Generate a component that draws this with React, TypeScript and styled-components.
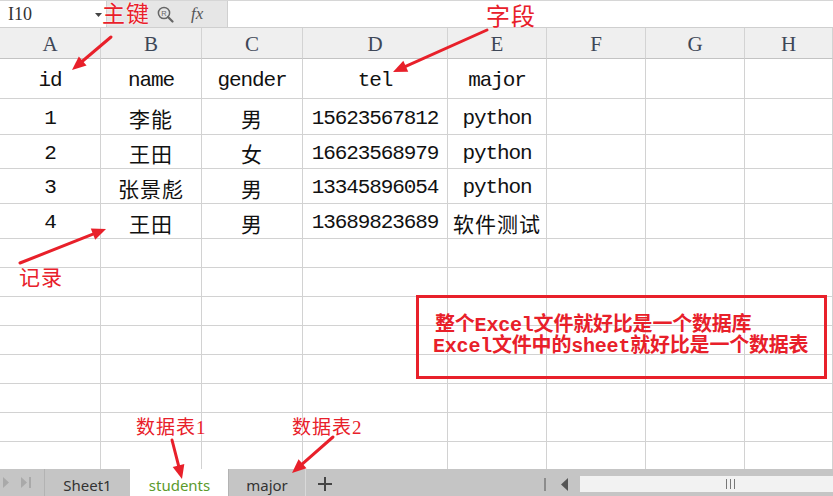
import React from "react";
import styled, { createGlobalStyle } from "styled-components";

const RED = "#e8202a";
const COLS = "101px 101px 101px 145px 99px 99px 99px 1fr";

const GlobalStyle = createGlobalStyle`
  html, body { margin: 0; padding: 0; background: #fff; overflow: hidden; }
  body { font-family: "Noto Sans", "Noto Sans CJK SC", sans-serif; }
  #root { width: 833px; height: 496px; }
`;

const Page = styled.div`
  position: relative;
  width: 833px;
  height: 496px;
  display: flex;
  flex-direction: column;
  overflow: hidden;
`;

const Toolbar = styled.div`
  height: 28px;
  box-sizing: border-box;
  display: flex;
  align-items: stretch;
  border-top: 1px solid #d6d6d6;
  border-bottom: 1px solid #cfcfcf;
  background: #e6e6e6;
`;

const NameBox = styled.div`
  width: 107px;
  box-sizing: border-box;
  background: #fff;
  border-right: 1px solid #d0d0d0;
  display: flex;
  align-items: center;
  justify-content: space-between;
  padding: 1px 4px 0 8px;
  font-family: "Liberation Serif", serif;
  font-size: 18px;
  color: #333;
`;

const ToolIcons = styled.div`
  width: 120px;
  display: flex;
  align-items: center;
  padding-left: 50px;
  gap: 17px;
  box-sizing: border-box;
`;

const Fx = styled.span`
  font-family: "Liberation Serif", serif;
  font-style: italic;
  font-size: 17px;
  color: #555;
  line-height: 1;
  margin-top: -1px;
`;

const Formula = styled.div`
  flex: 1;
  background: #fff;
  border-left: 1px solid #d0d0d0;
`;

const Sheet = styled.div`
  flex: 1;
  overflow: hidden;
  display: flex;
  flex-direction: column;
`;

const Row = styled.div<{ $h: number }>`
  display: grid;
  grid-template-columns: ${COLS};
  height: ${(p) => p.$h}px;
  flex-shrink: 0;
`;

const HeadCell = styled.div`
  box-sizing: border-box;
  background: #efefef;
  border-right: 1px solid #d3d3d3;
  border-bottom: 1px solid #c3c3c3;
  display: flex;
  align-items: center;
  justify-content: center;
  padding-top: 2px;
  font-family: "Liberation Serif", serif;
  font-size: 21px;
  color: #3e4757;
`;

const Cell = styled.div<{ $cjk?: boolean }>`
  box-sizing: border-box;
  border-right: 1px solid #d2d2d2;
  border-bottom: 1px solid #d2d2d2;
  display: flex;
  align-items: center;
  justify-content: center;
  padding-top: 3px;
  white-space: nowrap;
  color: #111;
  font-family: ${(p) =>
    p.$cjk ? `"Noto Sans CJK SC", sans-serif` : `"Liberation Mono", "Noto Sans CJK SC", monospace`};
  font-size: ${(p) => (p.$cjk ? 21 : 21)}px;
  letter-spacing: ${(p) => (p.$cjk ? 1 : -1.1)}px;
`;

const TabBar = styled.div`
  height: 27px;
  flex-shrink: 0;
  background: #c5c5c5;
  display: flex;
  align-items: stretch;
`;

const NavArea = styled.div`
  width: 44px;
  display: flex;
  align-items: center;
  padding-left: 3px;
  gap: 12px;
  box-sizing: border-box;
`;

const Tab = styled.div<{ $active?: boolean; $w: number }>`
  width: ${(p) => p.$w}px;
  box-sizing: border-box;
  display: flex;
  align-items: center;
  justify-content: center;
  padding-top: 5px;
  font-family: "Noto Sans", sans-serif;
  font-size: 15px;
  background: ${(p) => (p.$active ? "#fff" : "transparent")};
  color: ${(p) => (p.$active ? "#5c9a2c" : "#333")};
  border-left: 1px solid ${(p) => (p.$active ? "#fff" : "#b3b3b3")};
`;

const AddTab = styled.div`
  width: 38px;
  box-sizing: border-box;
  border-left: 1px solid #d9d9d9;
  display: flex;
  align-items: center;
  justify-content: center;
  padding-top: 3px;
`;

const Spacer = styled.div`
  flex: 1;
`;

const ScrollNav = styled.div`
  display: flex;
  align-items: center;
  gap: 15px;
  padding-right: 12px;
  padding-top: 3px;
`;

const Track = styled.div`
  width: 253px;
  height: 16px;
  align-self: center;
  margin-top: 3px;
  background: #f2f2f2;
  display: flex;
  align-items: center;
  justify-content: flex-end;
  padding-right: 98px;
  box-sizing: border-box;
`;

const Overlay = styled.svg`
  position: absolute;
  left: 0;
  top: 0;
  pointer-events: none;
`;

const Label = styled.span<{ $x: number; $y: number; $size: number }>`
  position: absolute;
  left: ${(p) => p.$x}px;
  top: ${(p) => p.$y}px;
  font-size: ${(p) => p.$size}px;
  line-height: 1;
  color: ${RED};
  font-family: "Liberation Serif", "Noto Sans CJK SC", serif;
  font-weight: 400;
  letter-spacing: 1px;
  white-space: nowrap;
  text-shadow: 0 0 2px #fff, 0 0 1px #fff;
`;

const NoteBox = styled.div`
  position: absolute;
  left: 416px;
  top: 295px;
  width: 411px;
  height: 84px;
  box-sizing: border-box;
  border: 3px solid ${RED};
  padding: 17px 0 0 16px;
  display: flex;
  flex-direction: column;
`;

const NoteLine = styled.div<{ $shift?: number }>`
  font-family: "Liberation Mono", "Noto Sans CJK SC", monospace;
  font-weight: 700;
  font-size: 20px;
  line-height: 21px;
  letter-spacing: -0.2px;
  color: ${RED};
  white-space: nowrap;
  margin-left: ${(p) => p.$shift ?? 0}px;
`;

const letters = ["A", "B", "C", "D", "E", "F", "G", "H"];

const data: { h: number; cells: string[] }[] = [
  { h: 40, cells: ["id", "name", "gender", "tel", "major"] },
  { h: 36, cells: ["1", "李能", "男", "15623567812", "python"] },
  { h: 34, cells: ["2", "王田", "女", "16623568979", "python"] },
  { h: 35, cells: ["3", "张景彪", "男", "13345896054", "python"] },
  { h: 35, cells: ["4", "王田", "男", "13689823689", "软件测试"] },
];

const isCjk = (s: string) => /[\u4e00-\u9fff]/.test(s);

function arrow(x1: number, y1: number, x2: number, y2: number) {
  const len = 14;
  const half = 6;
  const dx = x2 - x1;
  const dy = y2 - y1;
  const L = Math.hypot(dx, dy);
  const ux = dx / L;
  const uy = dy / L;
  const bx = x2 - ux * len;
  const by = y2 - uy * len;
  const px = -uy;
  const py = ux;
  return {
    line: { x1, y1, x2: bx + ux * 2, y2: by + uy * 2 },
    head: `${x2},${y2} ${bx + px * half},${by + py * half} ${bx - px * half},${by - py * half}`,
  };
}

const arrows = [
  arrow(111, 37, 72, 70),
  arrow(487, 30, 393, 72),
  arrow(20, 263, 106, 229),
  arrow(172, 440, 182, 479),
  arrow(333, 437, 292, 473),
];

export default function App() {
  return (
    <>
      <GlobalStyle />
      <Page>
        <Toolbar>
          <NameBox>
            <span>I10</span>
            <svg width="7" height="4" viewBox="0 0 7 4">
              <path d="M0 0 L7 0 L3.5 4 Z" fill="#444" />
            </svg>
          </NameBox>
          <ToolIcons>
            <svg width="17" height="17" viewBox="0 0 17 17">
              <circle cx="7" cy="7" r="5.6" fill="none" stroke="#666" strokeWidth="1.5" />
              <line x1="11" y1="11" x2="15.5" y2="15.5" stroke="#666" strokeWidth="2.2" strokeLinecap="round" />
              <text x="7" y="9.6" fontSize="7.5" textAnchor="middle" fill="#666" fontFamily="Liberation Sans, sans-serif">R</text>
            </svg>
            <Fx>fx</Fx>
          </ToolIcons>
          <Formula />
        </Toolbar>

        <Sheet>
          <Row $h={31}>
            {letters.map((l) => (
              <HeadCell key={l}>{l}</HeadCell>
            ))}
          </Row>
          {data.map((r, i) => (
            <Row $h={r.h} key={i}>
              {letters.map((l, j) => {
                const v = r.cells[j] ?? "";
                return (
                  <Cell key={l} $cjk={isCjk(v)}>
                    {v}
                  </Cell>
                );
              })}
            </Row>
          ))}
          {Array.from({ length: 9 }).map((_, i) => (
            <Row $h={29} key={"e" + i}>
              {letters.map((l) => (
                <Cell key={l} />
              ))}
            </Row>
          ))}
        </Sheet>

        <TabBar>
          <NavArea>
            <svg width="6" height="11" viewBox="0 0 6 11">
              <path d="M0 0 L6 5.5 L0 11 Z" fill="#a9a9a9" />
            </svg>
            <svg width="10" height="11" viewBox="0 0 10 11">
              <path d="M0 0 L6 5.5 L0 11 Z" fill="#a9a9a9" />
              <rect x="8" y="0" width="2" height="11" fill="#a9a9a9" />
            </svg>
          </NavArea>
          <Tab $w={86}>Sheet1</Tab>
          <Tab $w={98} $active>
            students
          </Tab>
          <Tab $w={77}>major</Tab>
          <AddTab>
            <svg width="14" height="14" viewBox="0 0 14 14">
              <rect x="6" y="0" width="2" height="14" fill="#444" />
              <rect x="0" y="6" width="14" height="2" fill="#444" />
            </svg>
          </AddTab>
          <Spacer />
          <ScrollNav>
            <svg width="2" height="13" viewBox="0 0 2 13">
              <rect width="2" height="13" fill="#8c8c8c" />
            </svg>
            <svg width="7" height="13" viewBox="0 0 7 13">
              <path d="M7 0 L0 6.5 L7 13 Z" fill="#555" />
            </svg>
          </ScrollNav>
          <Track>
            <svg width="9" height="10" viewBox="0 0 9 10">
              <rect x="0" width="1" height="10" fill="#777" />
              <rect x="4" width="1" height="10" fill="#777" />
              <rect x="8" width="1" height="10" fill="#777" />
            </svg>
          </Track>
        </TabBar>

        <Overlay width="833" height="496" viewBox="0 0 833 496">
          {arrows.map((a, i) => (
            <g key={i}>
              <line {...a.line} stroke={RED} strokeWidth="3" strokeLinecap="round" />
              <polygon points={a.head} fill={RED} />
            </g>
          ))}
        </Overlay>

        <Label $x={102} $y={3} $size={23}>主键</Label>
        <Label $x={486} $y={5} $size={24}>字段</Label>
        <Label $x={19} $y={268} $size={21}>记录</Label>
        <Label $x={136} $y={418} $size={19}>数据表1</Label>
        <Label $x={292} $y={418} $size={19}>数据表2</Label>

        <NoteBox>
          <NoteLine>整个Excel文件就好比是一个数据库</NoteLine>
          <NoteLine $shift={-2}>Excel文件中的sheet就好比是一个数据表</NoteLine>
        </NoteBox>
      </Page>
    </>
  );
}
